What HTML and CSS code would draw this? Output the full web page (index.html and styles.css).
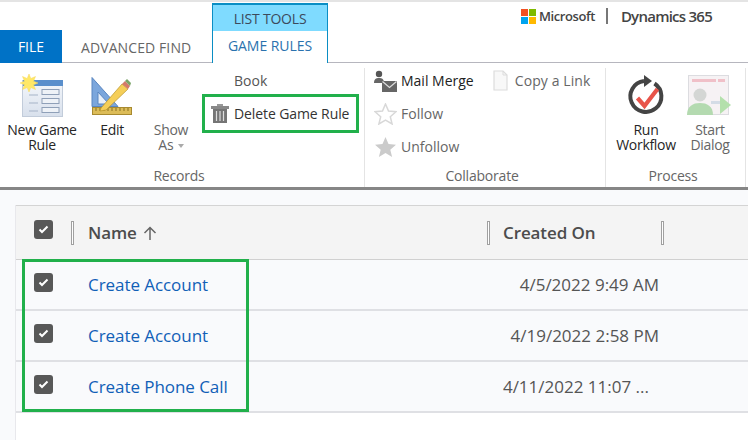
FILE: index.html
```html
<!DOCTYPE html>
<html lang="en">
<head>
<meta charset="utf-8">
<title>Game Rules</title>
<link rel="stylesheet" href="styles.css">
</head>
<body>
<div class="page">
  <header class="topbar">
    <nav class="tabs">
      <div class="tab-file">FILE</div>
      <div class="tab-find">ADVANCED FIND</div>
      <div class="context">
        <div class="context-title">LIST TOOLS</div>
        <div class="context-tab">GAME RULES</div>
      </div>
    </nav>
    <div class="brand">
      <svg class="ms-logo" width="15" height="15" viewBox="0 0 15 15"><rect width="7" height="7" fill="#f25022"/><rect x="8" width="7" height="7" fill="#7fba00"/><rect y="8" width="7" height="7" fill="#00a4ef"/><rect x="8" y="8" width="7" height="7" fill="#ffb900"/></svg>
      <span class="ms-name">Microsoft</span>
      <span class="brand-sep"></span>
      <span class="dyn-name">Dynamics 365</span>
    </div>
  </header>

  <section class="ribbon">
    <div class="group group-records">
      <div class="group-body">
        <div class="large w-new">
          <svg class="large-icon" width="46" height="46" viewBox="0 0 46 46">
            <defs>
              <linearGradient id="winbg" x1="0" y1="0" x2="0" y2="1"><stop offset="0" stop-color="#f4f7fb"/><stop offset="1" stop-color="#d8e0ec"/></linearGradient>
            </defs>
            <rect x="3.500" y="6.500" width="40" height="36" fill="url(#winbg)" stroke="#c2ccda"/>
            <rect x="4" y="6" width="40" height="6" fill="#5a8fcc"/>
            <rect x="23" y="15.500" width="17" height="5" fill="#eef2f7" stroke="#8fa0b8"/>
            <rect x="23" y="24.500" width="17" height="5" fill="#eef2f7" stroke="#8fa0b8"/>
            <rect x="23" y="33.500" width="17" height="5" fill="#eef2f7" stroke="#8fa0b8"/>
            <path d="M10 21h9M10 29h9M10 37h9" stroke="#a6b4c8" stroke-width="1.200"/>
            <path d="M10 0l1.800 4.500 4.700-2-2 4.700L19 9l-4.500 1.800 2 4.700-4.700-2L10 18l-1.800-4.500-4.700 2 2-4.700L1 9l4.500-1.800-2-4.700 4.700 2z" fill="#ffe866" stroke="#f6d860" stroke-width=".5"/>
          </svg>
          <span class="large-label">New Game<br>Rule</span>
        </div>
        <div class="large w-edit">
          <svg class="large-icon" width="46" height="46" viewBox="0 0 46 46">
            <path d="M3 3.500l26 29H3z" fill="#7ba6dc" stroke="#5a86c0"/>
            <path d="M9 18l11 12H9z" fill="#e8f0fa" stroke="#5a86c0"/>
            <rect x="3.500" y="33.500" width="39" height="7" fill="#dcbc58" stroke="#a88a30"/>
            <path d="M7 34v3M11 34v3M15 34v3M19 34v3M23 34v3M27 34v3M31 34v3M35 34v3M39 34v3" stroke="#8a7020"/>
            <path d="M12 34l21-24 6 5-22 21-6 1z" fill="#f5ce58" stroke="#b8952c" stroke-width=".7"/>
            <path d="M33 10l3-3 5 5-2 3z" fill="#d47a6a"/>
            <path d="M36 7l2-2 4 4-1 3z" fill="#7aa468"/>
          </svg>
          <span class="large-label">Edit</span>
        </div>
        <div class="large w-show is-muted">
          <span class="large-icon no-icon"></span>
          <span class="large-label">Show<br>As <i class="caret"></i></span>
        </div>
        <div class="small-col">
          <div class="small small-book"><span class="small-text">Book</span></div>
          <div class="small small-delete">
            <svg class="small-icon" width="20" height="21" viewBox="0 0 20 21"><rect x="1" y="3" width="18" height="3" fill="#888"/><rect x="7" y="1" width="6" height="2" fill="#999"/><path d="M3 6h14v14H3z" fill="#757575"/><path d="M6.500 8v10M10 8v10M13.500 8v10" stroke="#ddd" stroke-width="1.200"/></svg>
            <span class="small-text">Delete Game Rule</span>
          </div>
        </div>
      </div>
      <div class="group-label">Records</div>
    </div>

    <div class="group group-collab">
      <div class="group-body">
        <div class="small-col">
          <div class="small">
            <svg class="small-icon" width="23" height="22" viewBox="0 0 23 22"><circle cx="5" cy="4" r="3.200" fill="#555"/><path d="M0 13c0-4 2-5 5-5s5 1 5 5z" fill="#666"/><rect x="8" y="11" width="15" height="11" fill="#666"/><path d="M8.500 11.500l7 6 7-6" fill="none" stroke="#ddd" stroke-width="1.200"/></svg>
            <span class="small-text is-dark">Mail Merge</span>
          </div>
          <div class="small">
            <svg class="small-icon" width="23" height="22" viewBox="0 0 23 22"><path d="M11.500 1l3 7 7.500.7-5.700 5 1.800 7.300-6.600-3.900-6.600 3.900 1.800-7.300-5.700-5 7.500-.7z" fill="#fff" stroke="#d8d8d8" stroke-width="1.500"/></svg>
            <span class="small-text is-muted">Follow</span>
          </div>
          <div class="small">
            <svg class="small-icon" width="23" height="22" viewBox="0 0 23 22"><path d="M11.500 1l3 7 7.500.7-5.700 5 1.800 7.300-6.600-3.900-6.600 3.900 1.800-7.300-5.700-5 7.500-.7z" fill="#cbcbcb"/></svg>
            <span class="small-text is-muted">Unfollow</span>
          </div>
        </div>
        <div class="small-col col-link">
          <div class="small">
            <svg class="small-icon" width="15" height="21" viewBox="0 0 15 21"><path d="M1 1h9l4 4v15H1z" fill="#f8f8f8" stroke="#dcdcdc" stroke-width="1.200"/><path d="M10 1v4h4" fill="none" stroke="#dcdcdc"/></svg>
            <span class="small-text is-muted">Copy a Link</span>
          </div>
        </div>
      </div>
      <div class="group-label">Collaborate</div>
    </div>

    <div class="group group-process">
      <div class="group-body">
        <div class="large w-run">
          <svg class="large-icon" width="46" height="46" viewBox="0 0 46 46">
            <path d="M31.500 9.500A15.500 15.500 0 1 1 21 7" fill="none" stroke="#444" stroke-width="4"/>
            <path d="M21 1l8 6-8 6z" fill="#444"/>
            <path d="M14.500 24l7 8 13-17" fill="none" stroke="#e8544a" stroke-width="4.200"/>
          </svg>
          <span class="large-label">Run<br>Workflow</span>
        </div>
        <div class="large w-start is-muted">
          <svg class="large-icon" width="46" height="46" viewBox="0 0 46 46">
            <rect x="1.500" y="1.500" width="40" height="39" fill="#f6f2f4" stroke="#dcdce0"/>
            <rect x="5" y="5" width="24" height="3" fill="#f0c0c8"/>
            <rect x="31" y="5" width="7" height="3" fill="#f0c0c8"/>
            <rect x="24" y="27" width="13" height="3" fill="#d4dce6"/>
            <circle cx="13" cy="21" r="6.500" fill="#d4d6d4"/>
            <path d="M0 41c0-9 6-12 13-12s13 3 13 12z" fill="#b4dab0"/>
            <path d="M33 22l11 9-11 9z" fill="#b4e0ac"/>
          </svg>
          <span class="large-label">Start<br>Dialog</span>
        </div>
      </div>
      <div class="group-label">Process</div>
    </div>
  </section>

  <main class="content">
    <div class="grid">
      <div class="row head">
        <div class="cell-check"><span class="check"><svg width="11" height="9" viewBox="0 0 11 9"><path d="M1.500 4.500l2.500 2.500 5.500-5.500" fill="none" stroke="#fff" stroke-width="2"/></svg></span></div>
        <div class="cell-name"><i class="grip"></i><span class="head-text">Name</span><svg class="sort" width="14" height="14" viewBox="0 0 14 14"><path d="M7 14V1.500M1.500 7L7 1.500 12.500 7" fill="none" stroke="#666" stroke-width="1.500"/></svg></div>
        <div class="cell-date"><i class="grip"></i><span class="head-text">Created On</span><i class="grip grip-end"></i></div>
      </div>
      <div class="row">
        <div class="cell-check"><span class="check"><svg width="11" height="9" viewBox="0 0 11 9"><path d="M1.500 4.500l2.500 2.500 5.500-5.500" fill="none" stroke="#fff" stroke-width="2"/></svg></span></div>
        <div class="cell-name"><a class="link">Create Account</a></div>
        <div class="cell-value">4/5/2022 9:49 AM</div>
      </div>
      <div class="row">
        <div class="cell-check"><span class="check"><svg width="11" height="9" viewBox="0 0 11 9"><path d="M1.500 4.500l2.500 2.500 5.500-5.500" fill="none" stroke="#fff" stroke-width="2"/></svg></span></div>
        <div class="cell-name"><a class="link">Create Account</a></div>
        <div class="cell-value">4/19/2022 2:58 PM</div>
      </div>
      <div class="row">
        <div class="cell-check"><span class="check"><svg width="11" height="9" viewBox="0 0 11 9"><path d="M1.500 4.500l2.500 2.500 5.500-5.500" fill="none" stroke="#fff" stroke-width="2"/></svg></span></div>
        <div class="cell-name"><a class="link">Create Phone Call</a></div>
        <div class="cell-value cell-trunc">4/11/2022 11:07 ...</div>
      </div>
      <div class="rows-highlight"></div>
    </div>
  </main>
</div>
</body>
</html>
```

FILE: styles.css
```css
* { box-sizing: border-box; }
html, body { margin: 0; padding: 0; }
body { font-family: "Open Sans", "Liberation Sans", sans-serif; background: #fff; }
.page { width: 748px; height: 440px; overflow: hidden; display: flex; flex-direction: column; background: #f9fafc; }

/* top bar */
.topbar { height: 63px; flex: none; background: #fff; border-top: 2px solid #e4e4e4; border-bottom: 1px solid #b6b6be; display: flex; justify-content: space-between; padding-left: 0; }
.tabs { display: flex; align-items: flex-end; margin-bottom: -1px; }
.tab-file { width: 62px; height: 33px; background: #0072c6; color: #fff; font-size: 14px; display: flex; align-items: center; justify-content: center; }
.tab-find { width: 150px; height: 31px; padding-left: 19px; font-size: 14px; color: #666; display: flex; align-items: center; white-space: nowrap; letter-spacing: .1px; align-self: flex-end; }
.context { width: 116px; height: 60px; border: 1px solid #0a8ec4; border-top-width: 2px; border-bottom: 0; background: #fff; display: flex; flex-direction: column; align-self: flex-end; }
.context-title { height: 26px; background: #7fdbff; color: #3c4a5c; font-size: 14px; display: flex; align-items: center; justify-content: center; letter-spacing: -.2px; }
.context-tab { flex: 1; color: #2a72ae; font-size: 14px; display: flex; align-items: center; justify-content: center; padding-bottom: 3px; letter-spacing: -.05px; }
.brand { display: flex; align-items: center; height: 24px; padding-right: 36px; margin-top: 2px; color: #444; font-weight: 600; }
.ms-logo { margin-right: 3px; }
.ms-name { font-size: 13px; letter-spacing: -.4px; width: 60px; white-space: nowrap; }
.brand-sep { width: 2px; height: 16px; background: #777; margin: 0 13px 0 7px; }
.dyn-name { font-size: 15px; letter-spacing: -.75px; white-space: nowrap; }

/* ribbon */
.ribbon { height: 127px; flex: none; display: flex; background: #fff; border-bottom: 3px solid #868686; padding-top: 5px; }
.group { display: flex; flex-direction: column; border-right: 1px solid #e4e4e4; }
.group-records { width: 365px; }
.group-collab { width: 241px; }
.group-process { width: 140px; }
.group-body { flex: 1; display: flex; min-height: 0; }
.group-label { height: 19px; margin-bottom: 2px; font-size: 14px; color: #666; text-align: center; line-height: 19px; letter-spacing: -.2px; }
.group-records .group-label { padding-right: 6px; }
.group-collab .group-label { padding-right: 6px; }
.group-process .group-label { padding-right: 5px; }

.large { display: flex; flex-direction: column; align-items: center; color: #262626; }
.large-icon { display: block; height: 46px; flex: none; margin-top: 6px; margin-bottom: 2px; }
.large-label { font-size: 14px; line-height: 15px; text-align: center; white-space: nowrap; letter-spacing: -.3px; }
.is-muted { color: #666; }
.is-dark { color: #222; }
.w-new { width: 84px; }
.w-edit { width: 56px; }
.w-show { width: 62px; }
.w-run { width: 80px; }
.w-start { width: 48px; }
.no-icon { width: 46px; }
.caret { display: inline-block; width: 0; height: 0; border: 3.500px solid transparent; border-top: 4px solid #aaa; border-bottom: 0; margin-left: 1px; vertical-align: 2px; }

.small-col { display: flex; flex-direction: column; }
.small { height: 33px; display: flex; align-items: center; font-size: 14px; color: #333; white-space: nowrap; letter-spacing: 0; }
.small-icon { flex: none; }
.small-text { display: block; }
.small-book { height: 25px; padding: 3px 0 0 32px; color: #555; align-items: flex-start; }
.small-delete { width: 157px; height: 39px; border: 3px solid #21b04b; padding-left: 5px; letter-spacing: -.1px; margin-top: 1px; }
.small-delete .small-text { margin-left: 4px; }
.group-collab .small-col { padding-left: 9px; }
.group-collab .small-icon { margin-right: 4px; }
.group-collab .small:first-child { margin-top: -4px; }
.col-link { margin-left: 10px; }
.col-link .small-icon { margin-right: 7px; }
.col-link .small-text { letter-spacing: .1px; }

/* grid */
.content { flex: 1; padding: 15px 0 0 15px; display: flex; }
.grid { position: relative; flex: 1; background: #fff; border-left: 1px solid #e8e8ec; }
.row { display: grid; grid-template-columns: 55px 416px 260px; height: 51px; background: #f9fafc; border-bottom: 2px solid #dfe0e4; align-items: center; font-size: 17px; }
.row:last-of-type { border-bottom-width: 1px; height: 50px; }
.row.head { height: 55px; background: #f4f4f4; border-top: 1px solid #d4d4d4; border-bottom: 1px solid #d0d0d0; }
.cell-check { padding-left: 18px; display: flex; margin-top: -4px; }
.row.head .cell-check { margin-top: -7px; }
.check { width: 19px; height: 19px; background: #585858; border-radius: 3px; display: flex; align-items: center; justify-content: center; }
.cell-name { display: flex; align-items: center; padding-left: 17px; }
.cell-date { display: flex; align-items: center; }
.cell-value { width: 177px; text-align: right; padding-right: 5px; color: #555; white-space: nowrap; }
.cell-trunc { padding-right: 15px; }
.grip { width: 3px; height: 24px; border: 1px solid #a0a0a0; background: #fff; flex: none; }
.head .grip { margin-right: 13px; }
.cell-name .grip { margin-left: -17px; margin-right: 14px; }
.head .grip-end { margin: 0 0 0 66px; }
.head-text { font-weight: 600; color: #4c4c4c; white-space: nowrap; letter-spacing: -.1px; }
.sort { margin-left: 6px; }
.link { color: #1160b7; white-space: nowrap; letter-spacing: -.06px; }
.rows-highlight { position: absolute; left: 6px; top: 54px; width: 227px; height: 153px; border: 3px solid #21b04b; pointer-events: none; }
```
